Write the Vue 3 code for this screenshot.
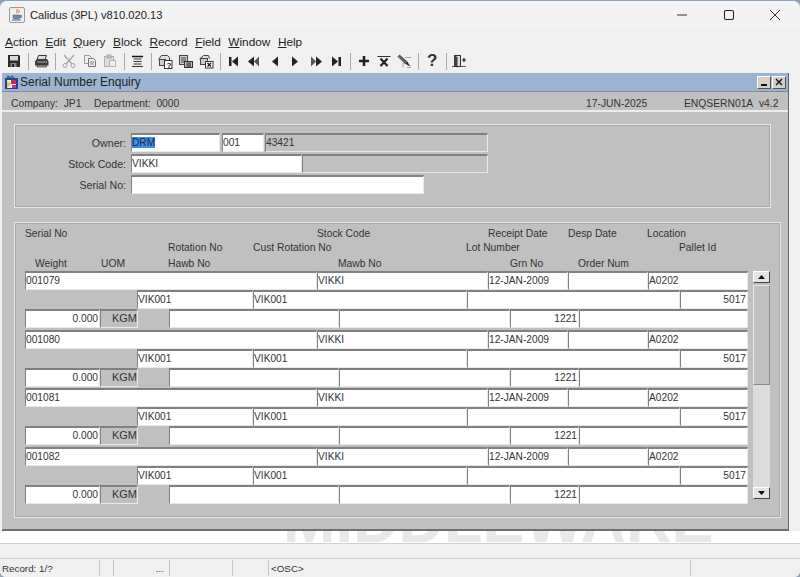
<script setup>
const menus = ['Action', 'Edit', 'Query', 'Block', 'Record', 'Field', 'Window', 'Help']
const records = ['001079', '001080', '001081', '001082']
const statusCells = [
  { cls: 's1', text: 'Record: 1/?' },
  { cls: 's2', text: '' },
  { cls: 's3', text: '...' },
  { cls: 's4', text: '' },
  { cls: 's5', text: '' },
  { cls: 's6', text: '<OSC>' },
  { cls: 's7', text: '' }
]
</script>

<template>
  <div class="win">
    <header class="titlebar">
      <svg class="javaicon" width="16" height="16" viewBox="0 0 16 16">
        <rect x="0.5" y="0.5" width="15" height="15" rx="1.5" fill="#f4efe6" stroke="#9a9a9a" />
        <path d="M8 2c1.5 1.5-1.5 2.5 0 4M10 3c1 1-1 2 0 3" fill="none" stroke="#d8642a" stroke-width="1" />
        <path d="M4 8h7v2.5c0 1-1 1.5-2 1.5H6c-1 0-2-.5-2-1.5zM11 8.500h1.500v2H11" fill="#6d8fb5" stroke="#4d6c90" stroke-width=".6" />
        <path d="M3 13h9" stroke="#4d6c90" />
      </svg>
      <span class="apptitle">Calidus (3PL) v810.020.13</span>
      <div class="winctl">
        <svg width="12" height="12" viewBox="0 0 12 12"><path d="M1 6h10" stroke="#333" stroke-width="1" /></svg>
        <svg width="12" height="12" viewBox="0 0 12 12"><rect x="1.500" y="1.500" width="9" height="9" rx="1.500" fill="none" stroke="#222" stroke-width="1.100" /></svg>
        <svg width="12" height="12" viewBox="0 0 12 12"><path d="M1 1l10 10M11 1L1 11" stroke="#333" stroke-width="1" /></svg>
      </div>
    </header>

    <nav class="menubar">
      <span v-for="m in menus" :key="m" class="menu"><u>{{ m[0] }}</u>{{ m.slice(1) }}</span>
    </nav>

    <div class="toolbar">
      <span class="tb"><svg width="14" height="14" viewBox="0 0 14 14"><path d="M1 1h11l1 1v11H1z" fill="#2b2b2b" /><rect x="3" y="2" width="8" height="4.500" fill="#d8d8d8" /><rect x="3.500" y="9" width="6" height="4" fill="#8a8a8a" /><rect x="5" y="10" width="2" height="3" fill="#222" /></svg></span>
      <i class="sep"></i>
      <span class="tb"><svg width="15" height="14" viewBox="0 0 15 14"><path d="M4.500 1.500h8l-1.500 4H3z" fill="#ddd" stroke="#333" /><path d="M1 7.500l2-2.500h10l1.500 2.500v4H1z" fill="#3c3c3c" /><path d="M3 8h10" stroke="#aaa" /><path d="M3 11h9.500v2H3z" fill="#999" stroke="#333" stroke-width=".6" /></svg></span>
      <i class="sep"></i>
      <span class="tb"><svg width="14" height="14" viewBox="0 0 14 14"><path d="M2 1l8 9M12 1L4 10" stroke="#a5a5a5" stroke-width="1.300" fill="none" /><circle cx="3" cy="11.500" r="2" fill="none" stroke="#a5a5a5" /><circle cx="11" cy="11.500" r="2" fill="none" stroke="#a5a5a5" /></svg></span>
      <span class="tb"><svg width="14" height="14" viewBox="0 0 14 14"><path d="M1.500 1.500h5l2 2v6h-7z" fill="#eee" stroke="#999" /><path d="M5.500 4.500h5l2 2v6h-7z" fill="#eee" stroke="#777" /><path d="M7 8h4M7 10h4" stroke="#888" /></svg></span>
      <span class="tb"><svg width="14" height="14" viewBox="0 0 14 14"><rect x="1.500" y="2.500" width="9" height="10" fill="#ddd" stroke="#b0b0b0" /><rect x="4" y="1" width="4" height="3" fill="#bbb" stroke="#aaa" /><path d="M6.500 6.500h6v6h-6z" fill="#eee" stroke="#b0b0b0" /></svg></span>
      <i class="sep"></i>
      <span class="tb"><svg width="13" height="13" viewBox="0 0 13 13"><path d="M1 1.500h11M2.500 4h8M2.500 6.500h8M2.500 9h8M1 11.500h11" stroke="#333" stroke-width="1" /><path d="M1 1.500h11" stroke="#111" stroke-width="1.500" /></svg></span>
      <i class="sep"></i>
      <span class="tb"><svg width="16" height="15" viewBox="0 0 16 15"><path d="M1.500 5.500l3-4h6l2 2v3" fill="#ddd" stroke="#444" /><rect x="2.500" y="5.500" width="6" height="6" fill="#ccc" stroke="#444" /><rect x="7.500" y="6.500" width="7.500" height="8" fill="#fff" stroke="#333" /><text x="9.400" y="13.500" class="qs">?</text></svg></span>
      <span class="tb"><svg width="16" height="15" viewBox="0 0 16 15"><rect x="1.500" y="1.500" width="8" height="9" fill="#ccc" stroke="#444" /><path d="M3 4h5M3 6h5M3 8h5" stroke="#444" /><rect x="6.500" y="7.500" width="8" height="6" fill="#bbb" stroke="#333" /><path d="M8 10h5M8 12h5M10 8v5M12 8v5" stroke="#333" stroke-width=".8" /></svg></span>
      <span class="tb"><svg width="16" height="15" viewBox="0 0 16 15"><path d="M1.500 5l4-3.500h5l1 3" fill="#ddd" stroke="#444" /><rect x="2.500" y="4.500" width="7" height="6" fill="#ccc" stroke="#444" /><rect x="7.500" y="7.500" width="7.500" height="6.500" fill="#fff" stroke="#333" /><path d="M9.500 9l3.500 3.500M13 9l-3.500 3.500" stroke="#111" stroke-width="1.200" /></svg></span>
      <i class="sep"></i>
      <span class="tb"><svg width="11" height="11" viewBox="0 0 11 11"><rect x="1" y="1" width="2.500" height="9" fill="#222" /><path d="M10 0.500v10L4 5.500z" fill="#222" /></svg></span>
      <span class="tb"><svg width="12" height="11" viewBox="0 0 12 11"><path d="M6 .5v10L0 5.500z" fill="#222" /><path d="M11 .5v10L6 5.500z" fill="#555" /></svg></span>
      <span class="tb"><svg width="8" height="11" viewBox="0 0 8 11"><path d="M7 .5v10L1 5.500z" fill="#222" /></svg></span>
      <span class="tb"><svg width="8" height="11" viewBox="0 0 8 11"><path d="M1 .5v10l6-5z" fill="#222" /></svg></span>
      <span class="tb"><svg width="12" height="11" viewBox="0 0 12 11"><path d="M1 .5v10l5-5z" fill="#555" /><path d="M6 .5v10l6-5z" fill="#222" /></svg></span>
      <span class="tb"><svg width="11" height="11" viewBox="0 0 11 11"><path d="M1 .5v10l6-5z" fill="#222" /><rect x="7.500" y="1" width="2.500" height="9" fill="#222" /></svg></span>
      <i class="sep"></i>
      <span class="tb"><svg width="12" height="12" viewBox="0 0 12 12"><path d="M6 1v10M1 6h10" stroke="#222" stroke-width="2.600" /></svg></span>
      <span class="tb"><svg width="14" height="12" viewBox="0 0 14 12"><path d="M.5 1.500h13" stroke="#333" stroke-width="1" /><path d="M3.500 3.500l7 7.500M10.500 3.500l-7 7.500" stroke="#222" stroke-width="2.200" /></svg></span>
      <span class="tb"><svg width="15" height="14" viewBox="0 0 15 14"><path d="M1 2.500L2.500 1l8 7L8.500 10z" fill="#666" stroke="#333" stroke-width=".7" /><path d="M8.500 10L10.500 8l3 4.500z" fill="#222" /><path d="M8 3.500h6.500M6 9v4.500M10 13.500h4" stroke="#aaa" stroke-width="1" /></svg></span>
      <i class="sep"></i>
      <span class="tb help">?</span>
      <i class="sep"></i>
      <span class="tb"><svg width="15" height="14" viewBox="0 0 15 14"><rect x="2.500" y="1.500" width="6" height="11" fill="#ddd" stroke="#333" /><path d="M2.500 1.500l3 1.500v10.500l-3-1z" fill="#444" /><path d="M10 6h4M12 4v4" stroke="#222" stroke-width="1.200" /><path d="M0 12.500h14" stroke="#333" stroke-width=".8" /></svg></span>
    </div>

    <section class="inner">
      <div class="innertitle">
        <svg class="formicon" width="15" height="15" viewBox="0 0 15 15">
          <rect x="1" y="3" width="13" height="11" fill="#2e3a9c" />
          <rect x="3" y="5" width="9" height="8" fill="#f0e8f4" />
          <path d="M3 6l4 3-4 4z" fill="#e8c820" />
          <path d="M7 5h5v4H7z" fill="#cc2a5a" />
          <path d="M8 10h4v3H8z" fill="#d03070" />
          <path d="M3 4l1-3 2 2 2-2 2 2" fill="none" stroke="#1e6a5a" stroke-width="1.200" />
        </svg>
        <span class="formname">Serial Number Enquiry</span>
        <div class="formctl">
          <span class="fbtn"><i class="dash"></i></span>
          <span class="fbtn"><svg width="8" height="8" viewBox="0 0 8 8"><path d="M1 1l6 6M7 1L1 7" stroke="#111" stroke-width="1.400" /></svg></span>
        </div>
      </div>

      <div class="infobar">
        <span class="company">Company:&nbsp; JP1</span>
        <span class="dept">Department:&nbsp; 0000</span>
        <span class="date">17-JUN-2025</span>
        <span class="formid">ENQSERN01A&nbsp; v4.2</span>
      </div>

      <div class="body">
        <div class="panel top">
          <div class="line">
            <label>Owner:</label>
            <div class="fld owner"><span class="sel">DRM</span></div>
            <div class="fld own2">001</div>
            <div class="fld ro own3">43421</div>
          </div>
          <div class="line">
            <label>Stock Code:</label>
            <div class="fld stock">VIKKI</div>
            <div class="fld ro stock2"></div>
          </div>
          <div class="line">
            <label>Serial No:</label>
            <div class="fld serial"></div>
          </div>
        </div>

        <div class="panel grid">
          <div class="heads h1">
            <span>Serial No</span><span>Stock Code</span><span>Receipt Date</span><span>Desp Date</span><span>Location</span>
          </div>
          <div class="heads h2">
            <span>Rotation No</span><span>Cust Rotation No</span><span>Lot Number</span><span>Pallet Id</span>
          </div>
          <div class="heads h3">
            <span>Weight</span><span>UOM</span><span>Hawb No</span><span>Mawb No</span><span>Grn No</span><span>Order Num</span>
          </div>

          <div class="tablewrap">
            <div class="rows">
              <div v-for="r in records" :key="r" class="rec">
                <div class="r r1">
                  <div class="fld">{{ r }}</div>
                  <div class="fld">VIKKI</div>
                  <div class="fld">12-JAN-2009</div>
                  <div class="fld"></div>
                  <div class="fld">A0202</div>
                </div>
                <div class="r r2">
                  <div class="fld">VIK001</div>
                  <div class="fld">VIK001</div>
                  <div class="fld"></div>
                  <div class="fld right">5017</div>
                </div>
                <div class="r r3">
                  <div class="fld right">0.000</div>
                  <div class="fld ro uom">KGM</div>
                  <div class="fld"></div>
                  <div class="fld"></div>
                  <div class="fld right">1221</div>
                  <div class="fld"></div>
                </div>
              </div>
            </div>
            <div class="scroll">
              <div class="sbtn"><svg width="7" height="4" viewBox="0 0 7 4"><path d="M3.500 0L7 4H0z" fill="#111" /></svg></div>
              <div class="track">
                <div class="thumb"></div>
              </div>
              <div class="sbtn"><svg width="7" height="4" viewBox="0 0 7 4"><path d="M0 0h7L3.500 4z" fill="#111" /></svg></div>
            </div>
          </div>
        </div>
      </div>
    </section>

    <div class="strip"><span class="wm">MIDDLEWARE</span></div>
    <div class="msgbar"></div>
    <footer class="status">
      <span v-for="c in statusCells" :key="c.cls" class="cell" :class="c.cls">{{ c.text }}</span>
    </footer>
  </div>
</template>

<style>
html, body { margin: 0; background: #8ea4bd; }
</style>

<style scoped>
.win {
  width: 800px;
  height: 576px;
  margin-top: 1px;
  background: #f0f0f0;
  border-radius: 7px 7px 6px 6px;
  overflow: hidden;
  display: flex;
  flex-direction: column;
  font-family: "Liberation Sans", Arial, sans-serif;
  color: #333;
}
.titlebar {
  height: 29px;
  flex: none;
  box-sizing: border-box;
  padding: 0 0 2px 9px;
  display: flex;
  align-items: center;
  background: #f3f3f3;
  font-size: 11.200px;
}
.apptitle { margin-left: 5px; color: #222; }
.javaicon { flex: none; }
.winctl {
  margin-left: auto;
  display: flex;
  gap: 34.500px;
  padding-right: 19px;
  align-items: center;
}
.menubar {
  height: 22px;
  flex: none;
  box-sizing: border-box;
  padding: 2px 0 0 5px;
  display: flex;
  align-items: center;
  gap: 7.600px;
  font-size: 11.800px;
  color: #222;
  background: #f0f0f0;
}
.toolbar {
  height: 20px;
  flex: none;
  margin-top: -1px;
  display: flex;
  align-items: center;
  padding-left: 4px;
  background: #f0f0f0;
}
.tb {
  width: 20.500px;
  height: 20px;
  display: flex;
  align-items: center;
  justify-content: center;
  flex: none;
}
.help { font-size: 17px; font-weight: bold; color: #333; }
.qs { font-size: 8px; font-weight: bold; fill: #222; font-family: "Liberation Sans", sans-serif; }
.sep {
  width: 1px;
  height: 17px;
  margin: 0 3px;
  background: #a8a8a8;
  flex: none;
}
.inner {
  flex: none;
  width: 787px;
  height: 458px;
  margin: 2px 0 0 2px;
  box-sizing: border-box;
  background: #c0c0c0;
  border-right: 1px solid #666;
  border-bottom: 2px solid #707070;
  display: flex;
  flex-direction: column;
}
.innertitle {
  height: 18px;
  flex: none;
  display: flex;
  align-items: center;
  background: #9ab4d2;
  border-bottom: 1px solid #8a8a8a;
  font-size: 12px;
  color: #222;
  position: relative;
}
.formicon { margin-left: 2px; flex: none; }
.formname { margin-left: 1px; }
.formctl { margin-left: auto; display: flex; gap: 1px; padding-right: 2px; }
.fbtn {
  width: 12px;
  height: 11px;
  background: #d4d0c8;
  border: 1px solid;
  border-color: #fff #555 #555 #fff;
  display: flex;
  align-items: center;
  justify-content: center;
}
.dash { width: 6px; height: 2px; background: #111; margin-top: 5px; }
.infobar {
  height: 20px;
  flex: none;
  box-sizing: border-box;
  display: flex;
  align-items: center;
  font-size: 10.300px;
  color: #333;
  padding: 5px 0 0 9px;
  border-bottom: 2px solid #ececec;
}
.company { width: 83px; }
.date { margin-left: auto; width: 98px; }
.formid { width: 104px; }
.body {
  flex: 1;
  min-height: 0;
  padding: 12px 0 0 12px;
  display: flex;
  flex-direction: column;
  gap: 14px;
}
.panel {
  box-sizing: border-box;
  border: 1px solid #e6e6e6;
  outline: 1px solid #a9a9a9;
  outline-offset: -2px;
}
.top {
  width: 757px;
  height: 84px;
  padding-top: 8px;
  display: flex;
  flex-direction: column;
  gap: 2px;
}
.line {
  display: flex;
  height: 19px;
  gap: 2px;
  font-size: 10.300px;
}
.line label {
  width: 111px;
  text-align: right;
  align-self: center;
  font-size: 10.600px;
  padding-right: 3px;
  flex: none;
}
.fld {
  box-sizing: border-box;
  height: 100%;
  background: #fff;
  border: 1px solid;
  border-color: #808080 #e8e8e8 #e8e8e8 #808080;
  border-width: 2px 1px 1px 1px;
  font-size: 10.200px;
  line-height: 15px;
  padding: 0 1px 0 0;
  color: #333;
  white-space: nowrap;
  overflow: hidden;
  min-width: 0;
}
.right { text-align: right; }
.ro { background: #c0c0c0; }
.sel { background: #3d8fe6; color: #1a2a4a; }
.owner { width: 89px; }
.own2 { width: 42px; margin-right: -1px; }
.own3 { width: 223px; }
.stock { width: 171px; margin-right: -2px; }
.stock2 { width: 186px; }
.serial { width: 293px; }
.grid {
  width: 767px;
  height: 296px;
  position: relative;
}
.heads {
  display: grid;
  font-size: 10.300px;
  line-height: 12px;
  color: #333;
  white-space: nowrap;
}
.h1 {
  height: 14px;
  margin-top: 5px;
  padding-left: 10px;
  grid-template-columns: 292px 171px 80px 79px 1fr;
}
.h2 {
  height: 16px;
  padding-left: 153px;
  grid-template-columns: 85px 213px 213px 1fr;
}
.h3 {
  height: 13px;
  padding-left: 20px;
  grid-template-columns: 66px 67px 170px 172px 68px 1fr;
}
.tablewrap {
  display: flex;
  align-items: flex-start;
  padding: 0 0 0 10px;
}
.rows { width: 723px; flex: none; }
.rec { height: 58.670px; }
.r { display: grid; height: 19px; }
.r1 { grid-template-columns: 292px 171px 80px 80px 100px; }
.r2 { padding-left: 112px; grid-template-columns: 116px 214px 213px 68px; }
.r3 { grid-template-columns: 75px 38px 31px 170px 171px 69px 169px; }
.r3 .fld:nth-child(3) { grid-column: 4; }
.r3 .fld:nth-child(4) { grid-column: 5; }
.r3 .fld:nth-child(5) { grid-column: 6; }
.r3 .fld:nth-child(6) { grid-column: 7; }
.uom { text-align: right; padding-right: 0; font-size: 11px; }
.scroll {
  width: 17px;
  margin-left: 5px;
  height: 228px;
  display: flex;
  flex-direction: column;
  flex: none;
}
.sbtn {
  height: 12px;
  flex: none;
  box-sizing: border-box;
  background: #e4e4e4;
  border: 1px solid;
  border-color: #fff #444 #444 #fff;
  display: flex;
  align-items: center;
  justify-content: center;
}
.track {
  flex: 1;
  margin: 2px 0 0;
  background: #dcdcdc;
}
.thumb {
  height: 100px;
  background: #c0c0c0;
  box-sizing: border-box;
  border: 1px solid;
  border-color: #e8e8e8 #8a8a8a #8a8a8a #e8e8e8;
}
.strip {
  height: 12px;
  flex: none;
  background: #fff;
  overflow: hidden;
  position: relative;
}
.wm {
  position: absolute;
  left: 283px;
  top: -42px;
  font-size: 63px;
  line-height: 62px;
  font-weight: bold;
  color: #e8e8e8;
  white-space: nowrap;
}
.msgbar {
  height: 16px;
  flex: none;
  box-sizing: border-box;
  background: #f0f0f0;
  border-top: 1px solid #cfcfcf;
  border-bottom: 1px solid #cfcfcf;
}
.status {
  flex: 1;
  display: flex;
  font-size: 9.800px;
  color: #333;
  background: #f0f0f0;
  align-items: stretch;
}
.cell {
  box-sizing: border-box;
  border-right: 1px solid #c4c4c4;
  padding: 3px 0 0 2px;
  margin: 1px 0;
  flex: none;
  white-space: nowrap;
}
.s1 { width: 100px; }
.s2 { width: 14px; }
.s3 { width: 56px; text-align: right; padding-right: 5px; }
.s4 { width: 63px; }
.s5 { width: 36px; }
.s6 { width: 422px; }
.s7 { flex: 1; border-right: 0; }
</style>
